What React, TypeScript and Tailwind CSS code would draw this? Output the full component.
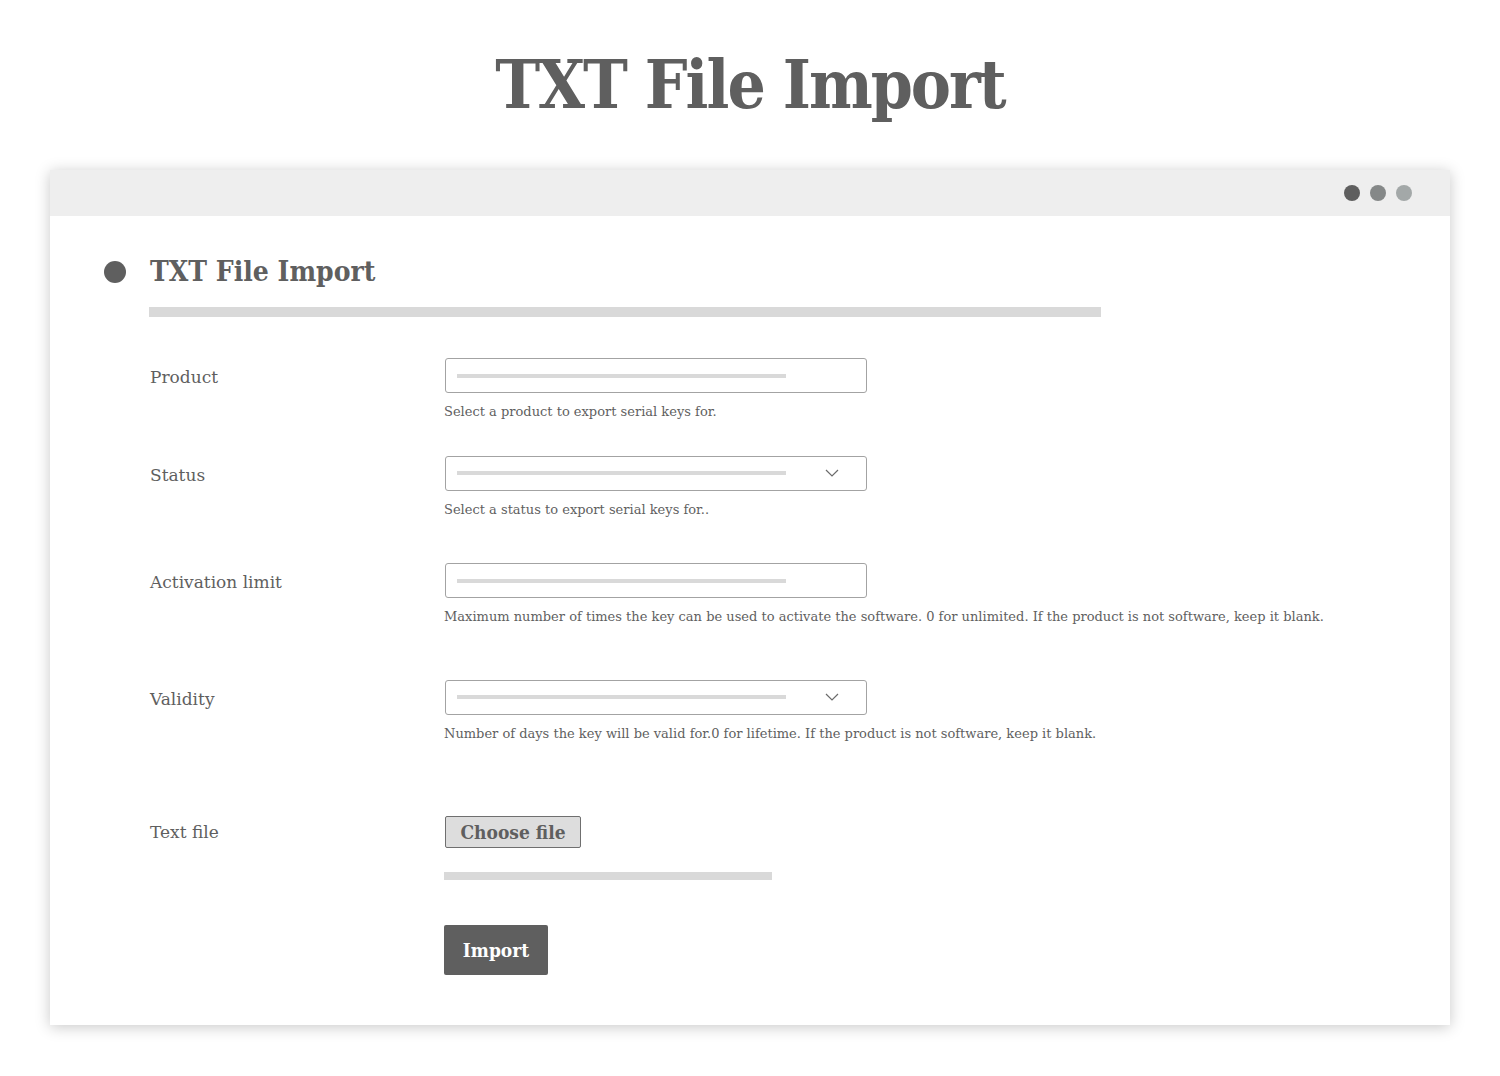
import React from 'react';

const font = { fontFamily: '"DejaVu Serif", "Liberation Serif", serif' };
const strong = { fontFamily: '"DejaVu Serif Condensed", "DejaVu Serif", serif' };

function Chevron() {
  return (
    <svg width="14" height="8" viewBox="0 0 14 8" fill="none" stroke="#6b6b6b" strokeWidth="1.2">
      <path d="M1 1l6 6 6-6" />
    </svg>
  );
}

function FakeInput({ select }: { select?: boolean }) {
  return (
    <div className="w-[422px] h-[35px] border border-[#a3a3a3] rounded-[3px] flex items-center pl-[11px] pr-[27px] justify-between">
      <div className="w-[329px] h-[4px] bg-[#d9d9d9]" />
      {select && <Chevron />}
    </div>
  );
}

interface RowProps {
  label: string;
  help: string;
  select?: boolean;
  className?: string;
}

function Row({ label, help, select, className }: RowProps) {
  return (
    <div className={`flex ${className ?? ''}`}>
      <div className="w-[295px] pt-[7px] text-[17px] text-[#5f5f5f]">{label}</div>
      <div>
        <FakeInput select={select} />
        <p className="mt-[9px] -ml-[1px] text-[13px] text-[#5f5f5f] whitespace-nowrap">{help}</p>
      </div>
    </div>
  );
}

export default function App() {
  return (
    <div className="w-[1500px] h-[1076px] bg-white" style={font}>
      {/* Page title */}
      <h1
        className="pt-[40px] text-center text-[67px] font-bold leading-[90px] text-[#5f5f5f] tracking-[-2px]"
        style={strong}
      >
        TXT File Import
      </h1>

      {/* Window */}
      <div className="mx-[50px] mt-[40px] h-[855px] bg-white shadow-[0_2px_14px_rgba(0,0,0,0.22)]">
        <div className="h-[46px] bg-[#eeeeee] flex items-center justify-end gap-[10px] pr-[38px]">
          <span className="w-[16px] h-[16px] rounded-full bg-[#5f5f5f]" />
          <span className="w-[16px] h-[16px] rounded-full bg-[#858888]" />
          <span className="w-[16px] h-[16px] rounded-full bg-[#a3a8a8]" />
        </div>

        <div className="pl-[54px] pt-[38px]">
          <div className="flex items-center gap-[24px]">
            <span className="w-[22px] h-[22px] rounded-full bg-[#5f5f5f]" />
            <h2 className="text-[28px] font-semibold text-[#5f5f5f] leading-[36px]" style={strong}>
              TXT File Import
            </h2>
          </div>
          <div className="ml-[45px] mt-[17px] w-[952px] h-[10px] bg-[#d9d9d9]" />

          <div className="ml-[46px] mt-[41px]">
            <Row label="Product" help="Select a product to export serial keys for." />
            <Row
              className="mt-[34px]"
              label="Status"
              select
              help="Select a status to export serial keys for.."
            />
            <Row
              className="mt-[44px]"
              label="Activation limit"
              help="Maximum number of times the key can be used to activate the software. 0 for unlimited. If the product is not software, keep it blank."
            />
            <Row
              className="mt-[53px]"
              label="Validity"
              select
              help="Number of days the key will be valid for.0 for lifetime. If the product is not software, keep it blank."
            />

            <div className="flex mt-[73px]">
              <div className="w-[295px] pt-[4px] text-[17px] text-[#5f5f5f]">Text file</div>
              <div>
                <button
                  className="w-[136px] h-[32px] bg-[#dddddd] border border-[#6f6f6f] rounded-[2px] text-[19px] font-semibold text-[#5f5f5f] leading-none"
                  style={strong}
                >
                  Choose file
                </button>
                <div className="mt-[24px] -ml-[1px] w-[328px] h-[8px] bg-[#d9d9d9]" />
                <button
                  className="mt-[45px] -ml-[1px] w-[104px] h-[50px] bg-[#5f5f5f] rounded-[2px] text-white text-[19px] font-semibold"
                  style={strong}
                >
                  Import
                </button>
              </div>
            </div>
          </div>
        </div>
      </div>
    </div>
  );
}
